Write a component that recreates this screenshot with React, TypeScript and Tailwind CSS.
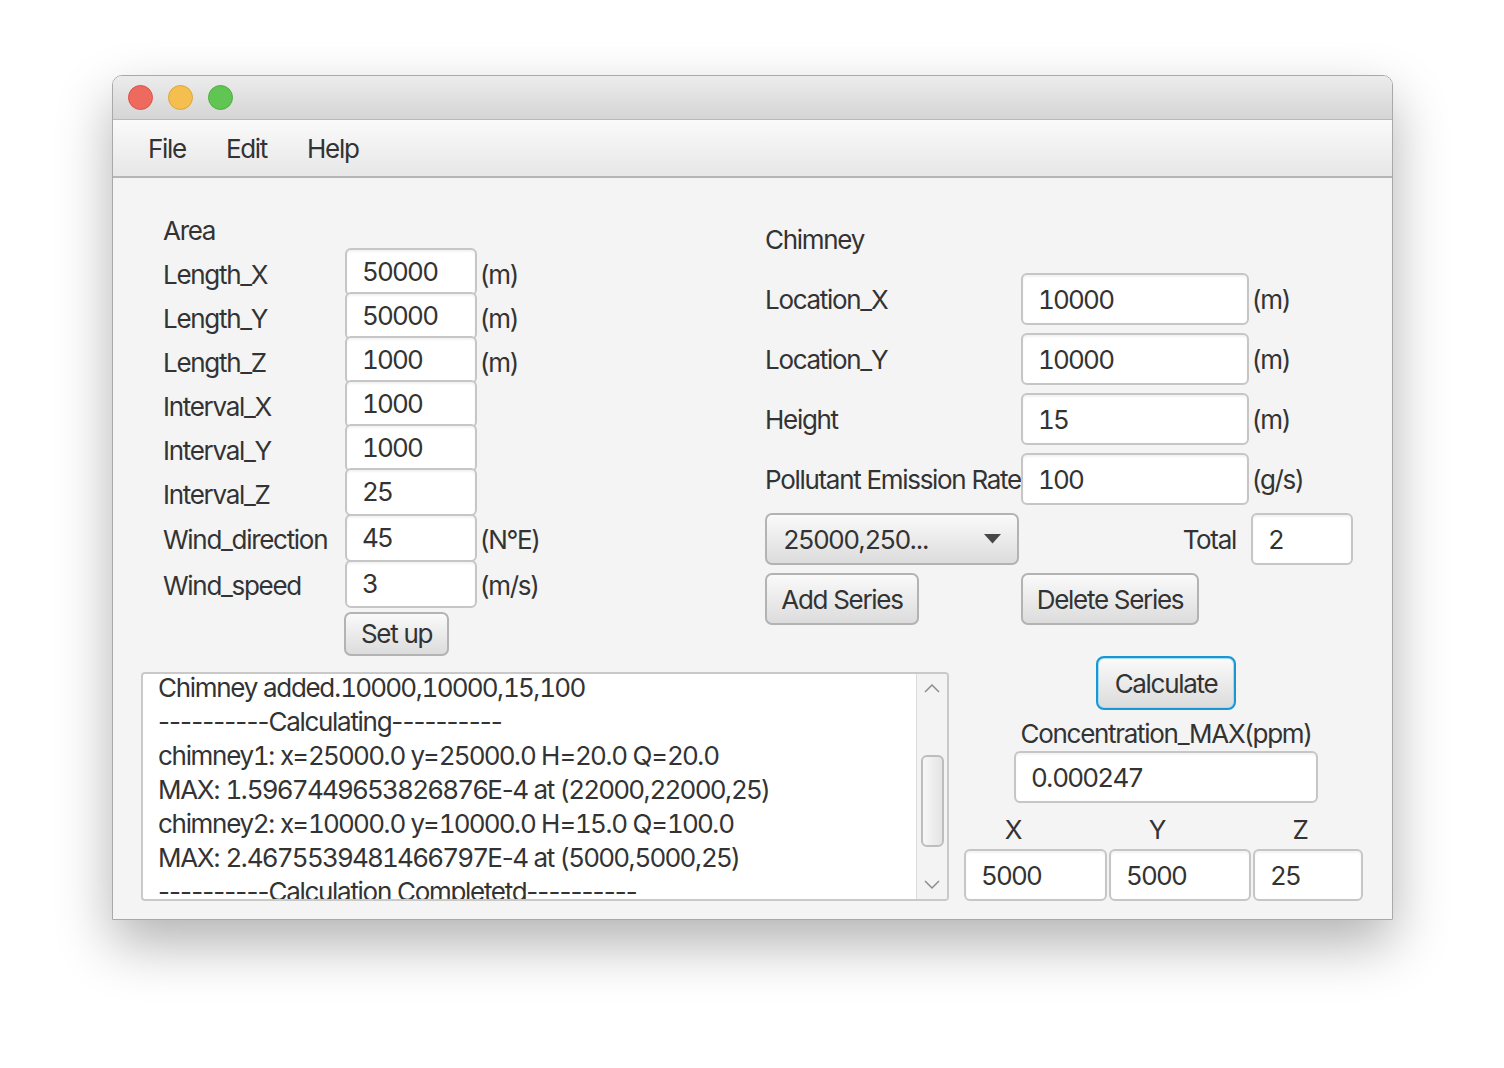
import React from "react";

const inputBox =
  "bg-white border-2 border-[#c6c6c6] rounded-[6px] shadow-[inset_0_2px_2px_rgba(0,0,0,0.05)] flex items-center pl-[15px] text-[#333]";
const btnBox =
  "bg-gradient-to-b from-[#fafafa] to-[#dcdcdc] border-2 border-[#b3b3b3] rounded-[7px] flex items-center justify-center text-[#333]";

// digits are drawn tabular but a little tighter, dash runs a little looser
function Num({ text }: { text: string }) {
  return (
    <>
      {text.split(/(\d+|-{2,})/).map((part, i) =>
        /^\d+$/.test(part) ? (
          <span key={i} className="tabular-nums tracking-[-0.07em]">
            {part}
          </span>
        ) : /^-{2,}$/.test(part) ? (
          <span key={i} className="tracking-[-0.035em]">
            {part}
          </span>
        ) : (
          <span key={i}>{part}</span>
        ),
      )}
    </>
  );
}

function Field({ value, className = "" }: { value: string; className?: string }) {
  return (
    <div className={`${inputBox} ${className}`}>
      <span>
        <Num text={value} />
      </span>
    </div>
  );
}

const areaRows = [
  { label: "Length_X", value: "50000", unit: "(m)" },
  { label: "Length_Y", value: "50000", unit: "(m)" },
  { label: "Length_Z", value: "1000", unit: "(m)" },
  { label: "Interval_X", value: "1000", unit: "" },
  { label: "Interval_Y", value: "1000", unit: "" },
  { label: "Interval_Z", value: "25", unit: "" },
];

const chimneyRows = [
  { label: "Location_X", value: "10000", unit: "(m)" },
  { label: "Location_Y", value: "10000", unit: "(m)" },
  { label: "Height", value: "15", unit: "(m)" },
  { label: "Pollutant Emission Rate", value: "100", unit: "(g/s)" },
];

const logLines = [
  "Chimney added.10000,10000,15,100",
  "----------Calculating----------",
  "chimney1: x=25000.0 y=25000.0 H=20.0 Q=20.0",
  "MAX: 1.5967449653826876E-4 at (22000,22000,25)",
  "chimney2: x=10000.0 y=10000.0 H=15.0 Q=100.0",
  "MAX: 2.4675539481466797E-4 at (5000,5000,25)",
  "----------Calculation Completetd----------",
];

function Chevron({ down = false }: { down?: boolean }) {
  return (
    <svg width="16" height="10" viewBox="0 0 16 10">
      <polyline
        points={down ? "1,1 8,8 15,1" : "1,9 8,2 15,9"}
        fill="none"
        stroke="#8c8c8c"
        strokeWidth="1.5"
      />
    </svg>
  );
}

export default function App() {
  return (
    <div className="w-[1504px] h-[1068px] bg-white pl-[112px] pt-[75px] font-['Inter',sans-serif] text-[26px] tracking-[-0.05em] text-[#333]">
      <div className="w-[1281px] h-[845px] flex flex-col border border-[#a9a9a9] rounded-t-[10px] overflow-hidden shadow-[0_24px_55px_rgba(0,0,0,0.3)]">
        {/* title bar */}
        <div className="h-[44px] shrink-0 flex items-center gap-[15px] pl-[15px] bg-gradient-to-b from-[#ececec] to-[#d5d5d5] border-b border-[#b9b9b9]">
          <div className="w-[25px] h-[25px] rounded-full bg-[#ee6a5f] border border-[#d9534a]" />
          <div className="w-[25px] h-[25px] rounded-full bg-[#f5bf4f] border border-[#dca43a]" />
          <div className="w-[25px] h-[25px] rounded-full bg-[#61c554] border border-[#4fae43]" />
        </div>

        {/* menu bar */}
        <div className="h-[58px] shrink-0 flex items-center gap-[40px] pl-[35px] bg-gradient-to-b from-[#fafafa] to-[#e7e7e7] border-b-2 border-[#b5b5b5]">
          <span>File</span>
          <span>Edit</span>
          <span>Help</span>
        </div>

        {/* content */}
        <div className="flex-1 bg-[#f4f4f4] flex flex-col">
          <div className="h-[478px] shrink-0 flex">
            {/* Area form */}
            <div className="w-[652px] pl-[50px] pt-[31px] flex flex-col">
              <div className="h-[44px] flex items-center">Area</div>
              {areaRows.map((r) => (
                <div key={r.label} className="h-[44px] flex items-center pt-[2px]">
                  <span className="w-[182px]">{r.label}</span>
                  <div className="w-[135px] h-full flex flex-col">
                    <Field value={r.value} className="-mt-[6px] h-[48px] w-[132px]" />
                  </div>
                  <span>{r.unit}</span>
                </div>
              ))}
              <div className="h-[46px] flex items-center pt-[2px]">
                <span className="w-[182px]">Wind_direction</span>
                <div className="w-[135px] h-full flex flex-col">
                  <Field value="45" className="-mt-[4px] h-[50px] w-[132px]" />
                </div>
                <span>(N°E)</span>
              </div>
              <div className="h-[46px] flex items-center pt-[2px]">
                <span className="w-[182px]">Wind_speed</span>
                <div className="w-[135px] h-full flex flex-col">
                  <Field value="3" className="-mt-[4px] h-[52px] w-[132px]" />
                </div>
                <span>(m/s)</span>
              </div>
              <div className={`${btnBox} ml-[181px] mt-[4px] w-[105px] h-[45px]`}>Set up</div>
            </div>

            {/* Chimney form */}
            <div className="flex-1 pt-[26px] flex flex-col gap-[8px]">
              <div className="h-[61px] flex items-center pt-[9px]">Chimney</div>
              {chimneyRows.map((r) => (
                <div key={r.label} className="h-[52px] flex items-center">
                  <span className="w-[256px] whitespace-nowrap">{r.label}</span>
                  <Field value={r.value} className="h-[52px] w-[228px]" />
                  <span className="ml-[3px]">{r.unit}</span>
                </div>
              ))}
              <div className="h-[52px] flex items-center">
                <div className={`${btnBox} !justify-between w-[254px] h-[52px] pl-[16px] pr-[16px]`}>
                  <span>
                    <Num text="25000,250..." />
                  </span>
                  <svg width="17" height="10" viewBox="0 0 17 10">
                    <polygon points="0,0 17,0 8.5,9.5" fill="#474747" />
                  </svg>
                </div>
                <span className="w-[232px] text-right pr-[15px]">Total</span>
                <Field value="2" className="h-[52px] w-[102px]" />
              </div>
              <div className="h-[52px] flex items-center">
                <div className={`${btnBox} w-[154px] h-[52px]`}>Add Series</div>
                <div className={`${btnBox} ml-[102px] w-[178px] h-[52px]`}>Delete Series</div>
              </div>
            </div>
          </div>

          {/* bottom */}
          <div className="flex pl-[28px]">
            <div className="mt-[16px] w-[808px] h-[229px] flex bg-white border-2 border-[#c9c9c9] rounded-[4px] overflow-hidden">
              <div className="flex-1 pl-[15px] overflow-hidden">
                <div className="-mt-[3px]">
                  {logLines.map((l, i) => (
                    <div key={i} className="h-[34px] leading-[34px] whitespace-nowrap">
                      <Num text={l} />
                    </div>
                  ))}
                </div>
              </div>
              <div className="w-[31px] bg-[#f3f3f3] border-l border-[#dcdcdc] flex flex-col items-center">
                <div className="h-[28px] flex items-center justify-center">
                  <Chevron />
                </div>
                <div className="mt-[53px] w-[23px] h-[92px] rounded-[6px] border-2 border-[#bdbdbd] bg-gradient-to-r from-[#f7f7f7] to-[#e4e4e4]" />
                <div className="mt-auto h-[28px] flex items-center justify-center">
                  <Chevron down />
                </div>
              </div>
            </div>

            <div className="ml-[15px] w-[404px] flex flex-col items-center">
              <div className="w-[140px] h-[54px] rounded-[8px] border-2 border-[#1897d4] p-[1px] bg-[#a7dbf2]">
                <div className="w-full h-full rounded-[5px] bg-gradient-to-b from-[#fafafa] to-[#dcdcdc] flex items-center justify-center">
                  Calculate
                </div>
              </div>
              <div className="mt-[6px] h-[34px] flex items-center">Concentration_MAX(ppm)</div>
              <Field value="0.000247" className="mt-[1px] w-[304px] h-[52px]" />
              <div className="mt-[9px] h-[34px] self-stretch flex items-center">
                <span className="w-[98px] text-center">X</span>
                <span className="w-[190px] text-center">Y</span>
                <span className="w-[96px] text-center">Z</span>
              </div>
              <div className="mt-[3px] self-stretch flex gap-[2px]">
                <Field value="5000" className="w-[143px] h-[52px]" />
                <Field value="5000" className="w-[142px] h-[52px]" />
                <Field value="25" className="w-[110px] h-[52px]" />
              </div>
            </div>
          </div>
        </div>
      </div>
    </div>
  );
}
